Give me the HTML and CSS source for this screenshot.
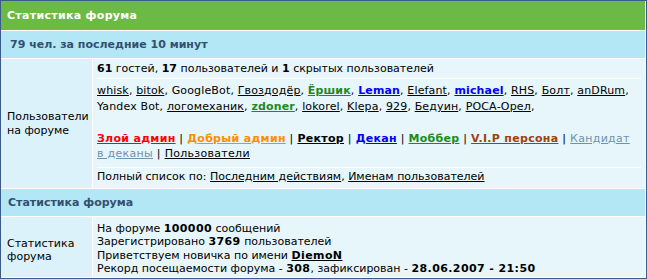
FILE: index.html
```html
<!DOCTYPE html>
<html lang="ru">
<head>
    <meta charset="UTF-8">
    <title>Статистика форума</title>
    <link rel="stylesheet" href="styles.css">
</head>
<body>
    <div class="forum-box">
        <div class="cat-title">Статистика форума</div>

        <div class="row-head">79 чел. за последние 10 минут</div>

        <div class="row row-online">
            <div class="row-label">Пользователи на форуме</div>
            <div class="row-body">
                <div class="online-count"><b>61</b> гостей, <b>17</b> пользователей и <b>1</b> скрытых пользователей</div>
                <div class="online-list">
                    <a href="#">whisk</a>, <a href="#">bitok</a>, GoogleBot, <a href="#">Гвоздодёр</a>, <a href="#" class="u-mob">Ёршик</a>, <a href="#" class="u-dean">Leman</a>, <a href="#">Elefant</a>, <a href="#" class="u-dean">michael</a>, <a href="#">RHS</a>, <a href="#">Болт</a>, <a href="#">anDRum</a>,
                    Yandex Bot, <a href="#">логомеханик</a>, <a href="#" class="u-mob">zdoner</a>, <a href="#">lokorel</a>, <a href="#">Klepa</a>, <a href="#">929</a>, <a href="#">Бедуин</a>, <a href="#">РОСА-Орел</a>,
                </div>
                <div class="legend">
                    <a href="#" class="u-evil">Злой админ</a> | <a href="#" class="u-good">Добрый админ</a> | <a href="#" class="u-rector">Ректор</a> | <a href="#" class="u-dean">Декан</a> | <a href="#" class="u-mob">Моббер</a> | <a href="#" class="u-vip">V.I.P персона</a> | <a href="#" class="u-cand">Кандидат в деканы</a> | <a href="#">Пользователи</a>
                </div>
                <div class="full-list">Полный список по: <a href="#">Последним действиям</a>, <a href="#">Именам пользователей</a></div>
            </div>
        </div>

        <div class="row-head sub">Статистика форума</div>

        <div class="row row-stats">
            <div class="row-label">Статистика форума</div>
            <div class="row-body stats">
                На форуме <b>100000</b> сообщений<br>
                Зарегистрировано <b>3769</b> пользователей<br>
                Приветствуем новичка по имени <a href="#" class="newbie">DiemoN</a><br>
                Рекорд посещаемости форума - <b>308</b>, зафиксирован - <b>28.06.2007 - 21:50</b>
            </div>
        </div>
    </div>
</body>
</html>
```

FILE: styles.css
```css
body {
    margin: 0;
    font-family: "DejaVu Sans", Verdana, sans-serif;
    font-size: 11px;
    color: #000;
    background: #fff;
}

a {
    color: #000;
}

.forum-box {
    width: 647px;
    height: 279px;
    box-sizing: border-box;
    border: 1px solid #3a5a8c;
    padding: 0 1px 1px 0;
    background: #fff;
    display: flex;
    flex-direction: column;
    gap: 1px;
}

.cat-title {
    background: #6bba45;
    color: #fff;
    font-weight: bold;
    letter-spacing: 0.3px;
    height: 29px;
    padding-left: 6px;
    display: flex;
    align-items: center;
}

.row-head {
    background: #b3e7f6;
    color: #34506f;
    font-weight: bold;
    height: 27px;
    flex: none;
    padding-left: 9px;
    display: flex;
    align-items: center;
}

.row-head.sub {
    padding-left: 7px;
}

.row {
    display: flex;
    gap: 1px;
}

.row-stats {
    flex: 1;
}

.row-label {
    width: 85px;
    flex: none;
    background: #dcf2fa;
    padding-left: 6px;
    display: flex;
    align-items: center;
    line-height: 13.4px;
}

.row-stats .row-label {
    padding-top: 6px;
    box-sizing: border-box;
    width: 91px;
}

.row-body {
    flex: 1;
    background: #e6f6fb;
    padding: 0 4px;
}

.online-count {
    padding: 3px 0 2px;
    border-bottom: 1px solid #fff;
    line-height: 14px;
}

.online-list {
    padding-top: 4px;
    line-height: 16px;
    letter-spacing: 0.15px;
}

.legend {
    margin-top: 16px;
    padding: 0 4px 6px 0;
    line-height: 15px;
    letter-spacing: 0.3px;
    border-bottom: 1px solid #fff;
}

.full-list {
    padding: 2px 0 4px;
    line-height: 14px;
}

.stats {
    padding-top: 5px;
    line-height: 13.4px;
}

.stats b,
.newbie {
    font-weight: bold;
    letter-spacing: 0.4px;
}

.u-evil { color: #ff0000; font-weight: bold; }
.u-good { color: #ff8c00; font-weight: bold; }
.u-rector { color: #000; font-weight: bold; }
.u-dean { color: #0000ff; font-weight: bold; }
.u-mob { color: #1e8a1e; font-weight: bold; }
.u-vip { color: #a0400d; font-weight: bold; }
.u-cand { color: #6f93ad; }
```
